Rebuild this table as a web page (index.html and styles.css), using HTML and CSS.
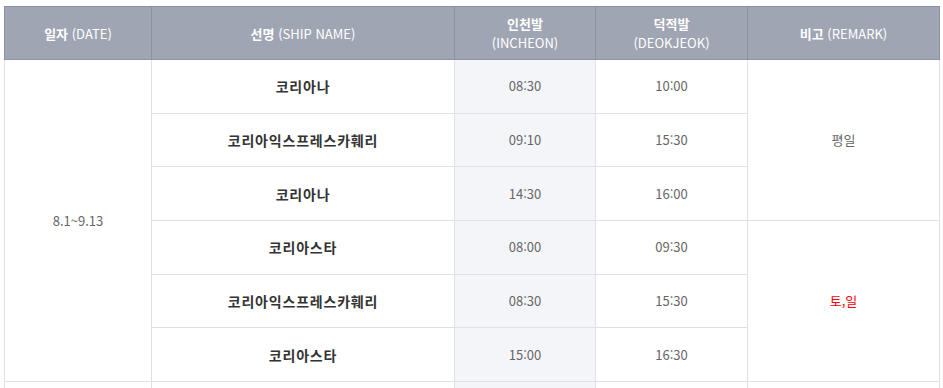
FILE: index.html
```html
<!DOCTYPE html>
<html lang="ko">
<head>
<meta charset="utf-8">
<link rel="stylesheet" href="styles.css">
</head>
<body>
<table class="schedule">
  <colgroup>
    <col class="c-date"><col class="c-ship"><col class="c-in"><col class="c-out"><col class="c-rem">
  </colgroup>
  <thead>
    <tr>
      <th><b>일자</b> (DATE)</th>
      <th><b>선명</b> (SHIP NAME)</th>
      <th><b>인천발</b><br>(INCHEON)</th>
      <th><b>덕적발</b><br>(DEOKJEOK)</th>
      <th><b>비고</b> (REMARK)</th>
    </tr>
  </thead>
  <tbody>
    <tr>
      <td rowspan="6" class="date">8.1~9.13</td>
      <td class="ship">코리아나</td>
      <td class="in">08:30</td>
      <td>10:00</td>
      <td rowspan="3">평일</td>
    </tr>
    <tr>
      <td class="ship">코리아익스프레스카훼리</td>
      <td class="in">09:10</td>
      <td>15:30</td>
    </tr>
    <tr>
      <td class="ship">코리아나</td>
      <td class="in">14:30</td>
      <td>16:00</td>
    </tr>
    <tr>
      <td class="ship">코리아스타</td>
      <td class="in">08:00</td>
      <td>09:30</td>
      <td rowspan="3" class="red">토,일</td>
    </tr>
    <tr>
      <td class="ship">코리아익스프레스카훼리</td>
      <td class="in">08:30</td>
      <td>15:30</td>
    </tr>
    <tr>
      <td class="ship">코리아스타</td>
      <td class="in">15:00</td>
      <td>16:30</td>
    </tr>
    <tr>
      <td></td><td class="ship">&nbsp;</td><td class="in">&nbsp;</td><td></td><td></td>
    </tr>
  </tbody>
</table>
</body>
</html>
```

FILE: styles.css
```css
html, body {
  margin: 0;
  background: #ffffff;
}
body {
  padding: 6px 0 0 4px;
  font-family: "Noto Sans CJK KR", "Noto Sans", sans-serif;
  font-size: 13px;
}
.schedule {
  border-collapse: collapse;
  table-layout: fixed;
  width: 935px;
}
.c-date { width: 147px; }
.c-ship { width: 303px; }
.c-in { width: 141px; }
.c-out { width: 152px; }
.c-rem { width: 192px; }
.schedule th {
  background: #a0a5b3;
  color: #ffffff;
  font-weight: normal;
  height: 52px;
  padding: 0;
  border: 1px solid #8d92a7;
  line-height: 19px;
  text-align: center;
  vertical-align: middle;
}
.schedule th b { font-weight: bold; }
.schedule td {
  border: 1px solid #e1e1e1;
  height: 52.7px;
  padding: 0;
  text-align: center;
  vertical-align: middle;
  color: #666666;
  line-height: 18px;
}
.schedule td.ship {
  font-weight: bold;
  color: #333333;
  font-size: 14px;
  letter-spacing: 0.8px;
}
.schedule td.in { background: #f4f5f9; }
.schedule td.red { color: #ff0000; }
```
